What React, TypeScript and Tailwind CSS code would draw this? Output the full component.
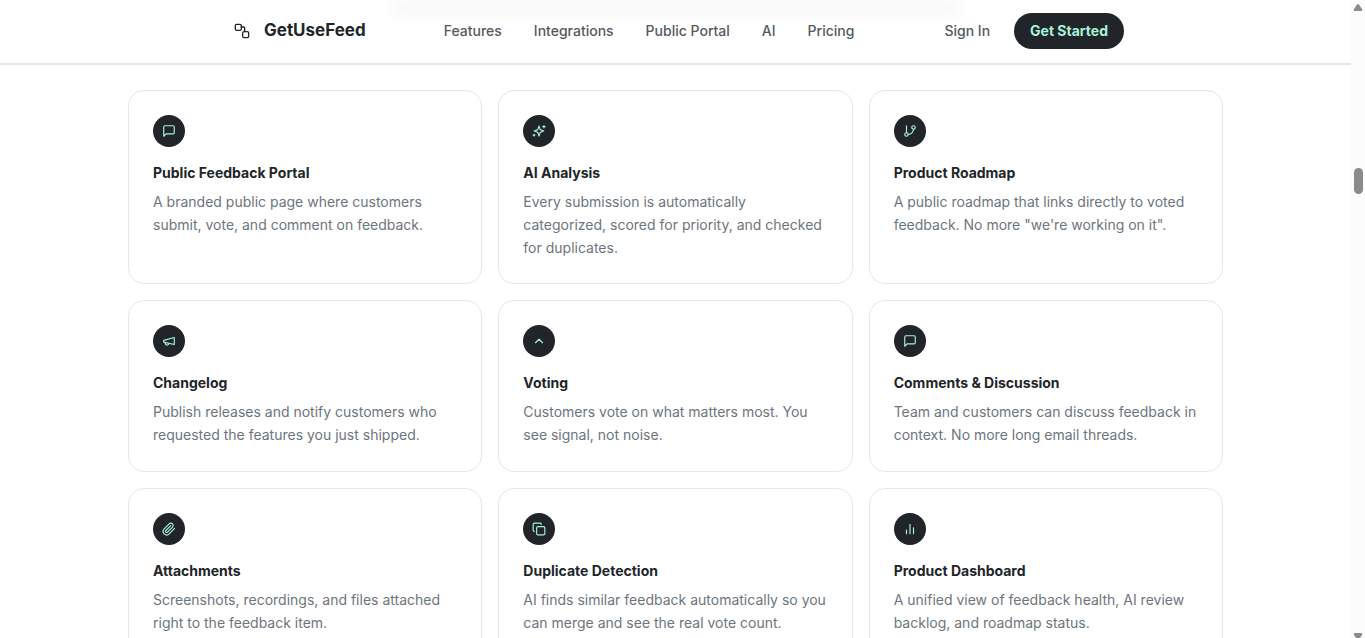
import type { ReactNode } from "react";
import { ChevronUp, Copy, GitBranch } from "lucide-react";

function Icon({ size = 14, children }: { size?: number; children: ReactNode }) {
  return (
    <svg width={size} height={size} viewBox="0 0 24 24" fill="none" stroke="currentColor" strokeWidth="2" strokeLinecap="round" strokeLinejoin="round">
      {children}
    </svg>
  );
}

const message = (
  <Icon>
    <path d="M21 15a2 2 0 0 1-2 2H7l-4 4V5a2 2 0 0 1 2-2h14a2 2 0 0 1 2 2z" />
  </Icon>
);

const sparkles = (
  <Icon>
    <path d="m12 3.5-1.7 5.2A2 2 0 0 1 9 10l-5.200 2L9 13.900a2 2 0 0 1 1.300 1.300L12 20.500l1.700-5.300a2 2 0 0 1 1.300-1.300l5.200-1.900L15 10a2 2 0 0 1-1.300-1.300z" />
    <path d="M20.5 2.5v4M22.5 4.5h-4M3.5 17.5v3M2 19h3" />
  </Icon>
);

const megaphone = (
  <Icon>
    <path d="m3 11 18-5v12L3 14v-3z" />
    <path d="M11.6 16.8a3 3 0 1 1-5.8-1.6" />
  </Icon>
);

const paperclip = (
  <Icon>
    <path d="m21.44 11.05-9.19 9.19a6 6 0 0 1-8.49-8.49l8.57-8.57A4 4 0 1 1 18 8.84l-8.59 8.57a2 2 0 0 1-2.83-2.83l8.49-8.48" />
  </Icon>
);

const bars = (
  <Icon>
    <path d="M18 20V10M12 20V4M6 20v-6" />
  </Icon>
);

const navLinks = ["Features", "Integrations", "Public Portal", "AI", "Pricing"];

const features: { title: string; text: string; icon: ReactNode }[] = [
  { title: "Public Feedback Portal", text: "A branded public page where customers submit, vote, and comment on feedback.", icon: message },
  { title: "AI Analysis", text: "Every submission is automatically categorized, scored for priority, and checked for duplicates.", icon: sparkles },
  { title: "Product Roadmap", text: "A public roadmap that links directly to voted feedback. No more \"we're working on it\".", icon: <GitBranch size={14} /> },
  { title: "Changelog", text: "Publish releases and notify customers who requested the features you just shipped.", icon: megaphone },
  { title: "Voting", text: "Customers vote on what matters most. You see signal, not noise.", icon: <ChevronUp size={14} /> },
  { title: "Comments & Discussion", text: "Team and customers can discuss feedback in context. No more long email threads.", icon: message },
  { title: "Attachments", text: "Screenshots, recordings, and files attached right to the feedback item.", icon: paperclip },
  { title: "Duplicate Detection", text: "AI finds similar feedback automatically so you can merge and see the real vote count.", icon: <Copy size={14} /> },
  { title: "Product Dashboard", text: "A unified view of feedback health, AI review backlog, and roadmap status.", icon: bars },
];

function Header() {
  return (
    <header className="relative border-b-2 border-[#e5e5e6] bg-white">
      <div className="absolute inset-0 overflow-hidden">
        <div className="mx-auto h-4 w-[42%] bg-[#f7f7f7] blur-sm" />
      </div>
      <div className="relative mx-auto flex h-[63px] max-w-[897px] items-center justify-between pb-px pl-[7px]">
        <a href="#" className="flex items-center gap-3.5 text-[17px] font-bold text-[#212529]">
          <Icon size={16}>
            <rect x="2" y="2" width="9" height="9" rx="2" />
            <path d="M11 6h3a2 2 0 0 1 2 2v5" />
            <rect x="13" y="13" width="9" height="9" rx="2" />
          </Icon>
          GetUseFeed
        </a>
        <nav className="mr-3 flex gap-8 text-sm font-medium text-[#54595e]">
          {navLinks.map((l) => (
            <a key={l} href="#">{l}</a>
          ))}
        </nav>
        <div className="flex items-center gap-6 text-sm">
          <a href="#" className="font-medium text-[#54595e]">Sign In</a>
          <button className="h-9 rounded-full bg-[#212529] px-4 font-bold text-[#a7f3d9]">Get Started</button>
        </div>
      </div>
    </header>
  );
}

function Scrollbar() {
  return (
    <div className="flex w-3.5 shrink-0 flex-col items-center justify-between bg-[#fcfcfc] pt-1 text-[#8b8b8b]">
      <svg width="10" height="7" viewBox="0 0 10 7" fill="currentColor">
        <path d="M4 .6a1.3 1.3 0 0 1 2 0l3 4.400c.6 1 .2 2-1 2H2C.8 7 .4 6 1 5z" />
      </svg>
      <div className="flex w-full flex-1 flex-col items-center pt-0.5">
        <div className="basis-1/4" />
        <div className="h-[26px] w-[9px] rounded-full bg-[#8b8b8b]" />
      </div>
      <svg width="10" height="5" viewBox="0 0 10 5" fill="currentColor">
        <path d="M2 0h6c1.2 0 1.6 1 1 2L7 5H3L1 2C.4 1 .8 0 2 0z" />
      </svg>
    </div>
  );
}

export default function App() {
  return (
    <div className="flex h-screen overflow-hidden bg-white font-[Inter,sans-serif]">
      <div className="min-w-0 flex-1">
        <Header />
        <main className="mx-auto grid max-w-[1095px] gap-4 pt-[25px] md:grid-cols-3">
          {features.map((f) => (
            <article key={f.title} className="rounded-2xl border border-[#e5e7e9] bg-white p-6">
              <div className="mb-4 flex size-8 items-center justify-center rounded-full bg-[#212529] text-[#a7f3d9]">
                {f.icon}
              </div>
              <h3 className="mb-2 text-sm font-bold text-[#212529]">{f.title}</h3>
              <p className="text-sm leading-relaxed text-[#6c757d]">{f.text}</p>
            </article>
          ))}
        </main>
      </div>
      <Scrollbar />
    </div>
  );
}
